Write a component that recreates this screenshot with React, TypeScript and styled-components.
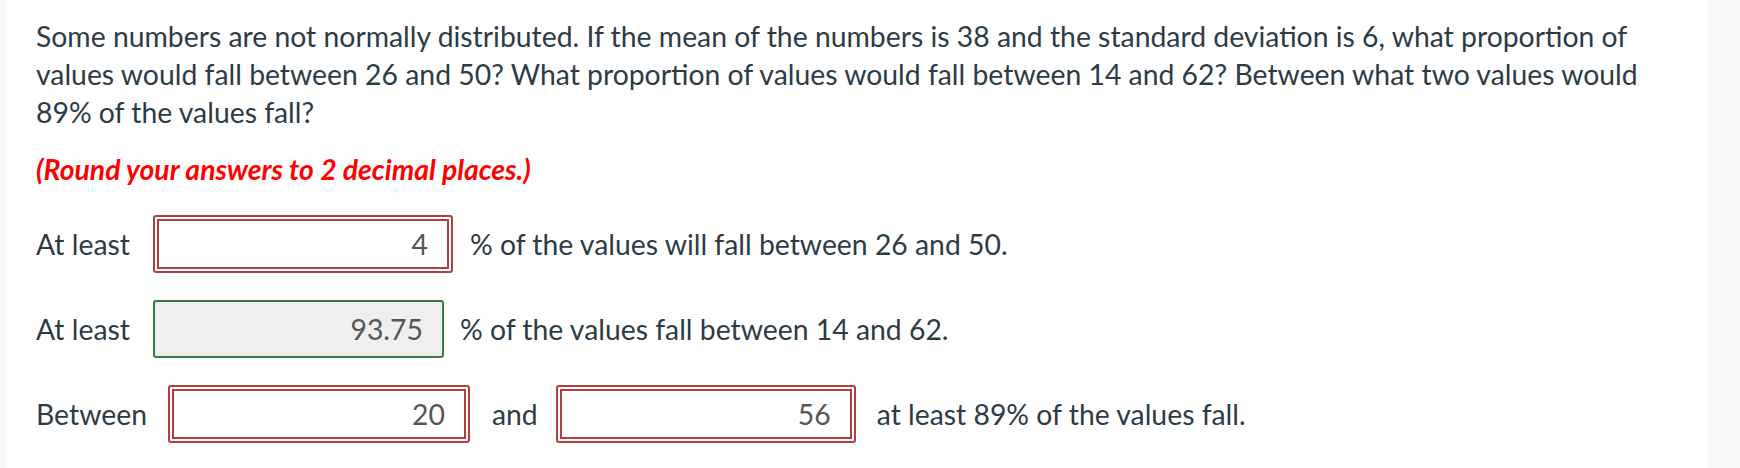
import React from 'react';
import styled, { createGlobalStyle } from 'styled-components';

const GlobalStyle = createGlobalStyle`
  html, body {
    margin: 0;
    padding: 0;
    background: #ffffff;
  }
  body {
    font-family: Lato, 'Noto Sans', sans-serif;
    color: #2d3b45;
  }
  * {
    box-sizing: border-box;
  }
`;

type FieldState = 'wrong' | 'right';

function QuestionPage() {
  return (
    <Styled.Page>
      <Styled.Gutter />
      <Styled.Main>
        <Styled.Prompt>
          Some numbers are not normally distributed. If the mean of the numbers is 38 and the standard
          deviation is 6, what proportion of values would fall between 26 and 50? What proportion of values
          would fall between 14 and 62? Between what two values would 89% of the values fall?
        </Styled.Prompt>
        <Styled.Note>(Round your answers to 2 decimal places.)</Styled.Note>

        <Styled.Answers>
          <Styled.Row>
            <Styled.Label>At least</Styled.Label>
            <Styled.Field $state="wrong" $width={300} readOnly value="4" />
            <Styled.Text>% of the values will fall between 26 and 50.</Styled.Text>
          </Styled.Row>

          <Styled.Row>
            <Styled.Label>At least</Styled.Label>
            <Styled.Field $state="right" $width={291} $after={16} readOnly value="93.75" />
            <Styled.Text>% of the values fall between 14 and 62.</Styled.Text>
          </Styled.Row>

          <Styled.Row>
            <Styled.Label>Between</Styled.Label>
            <Styled.Field $state="wrong" $width={302} $before={21} $after={22} readOnly value="20" />
            <Styled.Text>and</Styled.Text>
            <Styled.Field $state="wrong" $width={300} $before={18} $after={21} readOnly value="56" />
            <Styled.Text>at least 89% of the values fall.</Styled.Text>
          </Styled.Row>
        </Styled.Answers>
      </Styled.Main>
      <Styled.Rail />
    </Styled.Page>
  );
}

export default function App() {
  return (
    <>
      <GlobalStyle />
      <QuestionPage />
    </>
  );
}

const Page = styled.div`
  display: flex;
  width: 100%;
  height: 100vh;
  overflow: hidden;
`;

const Gutter = styled.div`
  flex: 0 0 7px;
  background: #f9f9f9;
`;

const Rail = styled.div`
  flex: 0 0 32px;
  background: #f9f9f9;
`;

const Main = styled.div`
  flex: 1;
  padding: 17px 28px 0 29px;
  font-size: 28.35px;
  line-height: 38px;
`;

const Prompt = styled.p`
  margin: 0;
`;

const Note = styled.p`
  margin: 19px 0 0;
  color: #ff0000;
  font-style: italic;
  font-weight: 700;
`;

const Answers = styled.div`
  display: flex;
  flex-direction: column;
  gap: 27px;
  margin-top: 27px;
`;

const Row = styled.div`
  display: flex;
  align-items: center;
  height: 58px;
`;

const Label = styled.span`
  white-space: nowrap;
`;

const Text = styled.span`
  white-space: nowrap;
`;

const Field = styled.input<{ $state: FieldState; $width: number; $before?: number; $after?: number }>`
  flex: 0 0 auto;
  width: ${(p) => p.$width}px;
  height: 58px;
  margin: 0 ${(p) => p.$after ?? 17}px 0 ${(p) => p.$before ?? 23}px;
  padding: 0 19px 0 10px;
  font-family: Lato, 'Noto Sans', sans-serif;
  font-size: 28.35px;
  color: #555555;
  text-align: right;
  outline: none;
  border-radius: 3px;
  border: ${(p) => (p.$state === 'wrong' ? '6px double #b0403f' : '2px solid #3b7a3e')};
  background: ${(p) => (p.$state === 'wrong' ? '#ffffff' : '#efefef')};
`;

const Styled = {
  Page,
  Gutter,
  Rail,
  Main,
  Prompt,
  Note,
  Answers,
  Row,
  Label,
  Text,
  Field,
};
